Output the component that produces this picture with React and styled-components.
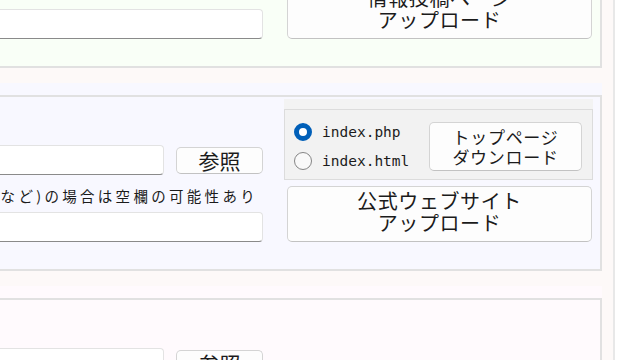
import React from "react";
import styled, { createGlobalStyle } from "styled-components";

const GlobalStyle = createGlobalStyle`
  html, body {
    margin: 0;
    padding: 0;
    background: #ffffff;
    overflow: hidden;
  }
  body {
    font-family: "Noto Sans CJK JP", "Noto Sans", sans-serif;
    color: #1b1b1b;
  }
`;

const tints = {
  green: "#f9fff7",
  blue: "#f8f8ff",
  pink: "#fffafd",
};

// the screenshot is a crop of a wider page, so the frame starts off-screen
const Frame = styled.div`
  box-sizing: border-box;
  width: 915px;
  margin: -46px 0 0 -300px;
  padding: 0 11px 0 10px;
  background: #fdf9f8;
  border-right: 2px solid #e8e8e8;
`;

const Section = styled.section`
  padding-top: 12px;
  margin-bottom: 15px;
  background: ${(p) => tints[p.$tint]};
`;

const SectionBody = styled.div`
  display: grid;
  grid-template-columns: 1fr 309px;
  column-gap: 21px;
  align-items: end;
  padding: 1px 7px 27px;
  border: 2px solid #e1e1e1;
`;

const FieldColumn = styled.div`
  display: flex;
  flex-direction: column;
  padding-top: ${(p) => p.$top}px;
`;

const SideColumn = styled.div`
  display: flex;
  flex-direction: column;
  gap: 6px;
`;

const TextInput = styled.input`
  box-sizing: border-box;
  width: 100%;
  height: 30px;
  margin: ${(p) => p.$mt || 0}px 0 0;
  padding: 0 8px;
  background: #ffffff;
  border: 1px solid #e3e3e3;
  border-bottom-color: #8a8a8a;
  border-radius: 4px;
  font: 14px "Noto Sans CJK JP", sans-serif;
`;

const InputRow = styled.div`
  display: flex;
  align-items: center;
  gap: 12px;
  height: 30px;
`;

const Button = styled.button`
  box-sizing: border-box;
  margin: 0;
  padding: 0;
  background: #fdfdfd;
  border: 1px solid #d4d4d4;
  border-bottom-color: #c2c2c2;
  border-radius: 5px;
  color: #1b1b1b;
  font-family: "Noto Sans CJK JP", sans-serif;
  text-align: center;
  cursor: pointer;
`;

const BrowseButton = styled(Button)`
  flex: 0 0 87px;
  height: 27px;
  font-size: 21px;
  line-height: 1;
`;

const DownloadButton = styled(Button)`
  width: 153px;
  height: 49px;
  font-size: 17px;
  letter-spacing: 0.7px;
  line-height: 20px;
`;

const UploadButton = styled(Button)`
  height: 56px;
  margin: 0 1px 0 3px;
  padding-bottom: 4px;
  font-size: 20px;
  letter-spacing: 0.6px;
  line-height: 22px;
`;

const Note = styled.p`
  margin: 11px 0 0;
  padding-right: 5px;
  font-size: 14.5px;
  letter-spacing: 3.3px;
  line-height: 20px;
  text-align: right;
  white-space: nowrap;
`;

const ChoiceGroup = styled.div`
  padding-top: 10px;
  background: #f3f3f3;
`;

const ChoiceBox = styled.div`
  box-sizing: border-box;
  height: 71px;
  display: flex;
  align-items: center;
  justify-content: space-between;
  padding: 4px 10px 0 9px;
  border: 1px solid #dcdcdc;
  background: #f2f2f2;
`;

const RadioList = styled.div`
  display: flex;
  flex-direction: column;
`;

const RadioLabel = styled.label`
  display: flex;
  align-items: center;
  gap: 10px;
  height: 29px;
  font: 14.5px "DejaVu Sans Mono", monospace;
  color: #1b1b1b;
`;

const Radio = styled.input`
  appearance: none;
  box-sizing: border-box;
  width: 18px;
  height: 18px;
  margin: 0;
  border-radius: 50%;
  border: 1px solid #858585;
  background: #f9f9f9;
  &:checked {
    border: 5px solid #005fb8;
    background: #ffffff;
  }
`;

export default function App() {
  return (
    <>
      <GlobalStyle />
      <Frame>
        <Section $tint="green">
          <SectionBody>
            <FieldColumn $top={40}>
              <TextInput />
            </FieldColumn>
            <SideColumn>
              <UploadButton>
                情報投稿ページ
                <br />
                アップロード
              </UploadButton>
            </SideColumn>
          </SectionBody>
        </Section>

        <Section $tint="blue">
          <SectionBody>
            <FieldColumn $top={47}>
              <InputRow>
                <TextInput />
                <BrowseButton>参照</BrowseButton>
              </InputRow>
              <Note>など)の場合は空欄の可能性あり</Note>
              <TextInput $mt={6} />
            </FieldColumn>
            <SideColumn>
              <ChoiceGroup>
                <ChoiceBox>
                  <RadioList>
                    <RadioLabel>
                      <Radio type="radio" name="top" defaultChecked />
                      index.php
                    </RadioLabel>
                    <RadioLabel>
                      <Radio type="radio" name="top" />
                      index.html
                    </RadioLabel>
                  </RadioList>
                  <DownloadButton>
                    トップページ
                    <br />
                    ダウンロード
                  </DownloadButton>
                </ChoiceBox>
              </ChoiceGroup>
              <UploadButton>
                公式ウェブサイト
                <br />
                アップロード
              </UploadButton>
            </SideColumn>
          </SectionBody>
        </Section>

        <Section $tint="pink">
          <SectionBody>
            <FieldColumn $top={47}>
              <InputRow>
                <TextInput />
                <BrowseButton>参照</BrowseButton>
              </InputRow>
            </FieldColumn>
            <SideColumn />
          </SectionBody>
        </Section>
      </Frame>
    </>
  );
}
